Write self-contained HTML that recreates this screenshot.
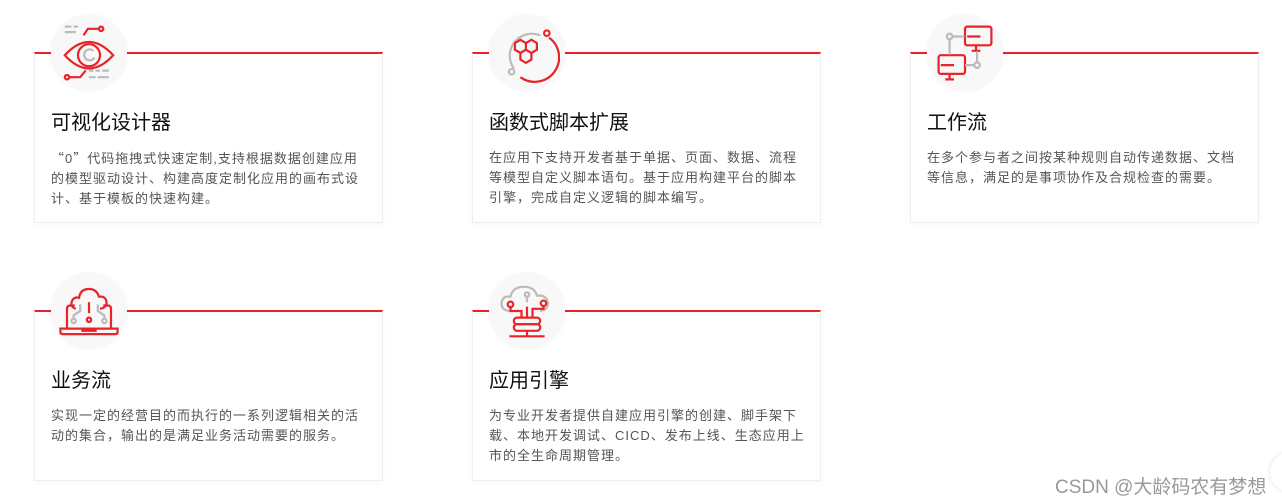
<!DOCTYPE html>
<html><head><meta charset="utf-8"><style>
body{margin:0;width:1282px;height:501px;background:#fff;position:relative;overflow:hidden;font-family:"Liberation Sans","Noto Sans CJK SC",sans-serif;}
.card{position:absolute;width:349px;height:171px;border:1px solid #eceef3;border-top:2px solid #e8232a;box-sizing:border-box;box-shadow:0 2px 6px rgba(0,0,0,0.03);background:#fff}
.circ{position:absolute;left:16px;top:-39px;width:76px;height:76px;border-radius:50%;background:#f8f8f8;box-shadow:0 0 3px rgba(0,0,0,0.06)}
.circ svg{position:absolute;left:5px;top:5px;width:66px;height:66px}
.t{position:absolute;left:16px;top:52px;font-size:20px;color:#111;}
.d{position:absolute;left:16px;top:94px;width:330px;font-size:13px;letter-spacing:1px;line-height:20px;color:#555;white-space:nowrap}
.q{font-family:"Noto Sans CJK SC",sans-serif}
.wm{position:absolute;left:1055px;top:472px;font-size:19px;color:#999;text-shadow:0 0 1px #fff}
</style></head><body>

<div class="card" style="left:34px;top:52px">
<div class="circ"><svg viewBox="0 0 60 60" fill="none" stroke-width="2">
<path d="M8 32 Q30 8 52 32 Q30 56 8 32Z" stroke="#e8232a"/>
<circle cx="30" cy="32" r="10" stroke="#e8232a"/>
<path d="M34 28a5 5 0 1 0 1 6" stroke="#bbb"/>
<path d="M25 14 l4-6 h10" stroke="#e8232a"/><circle cx="41" cy="8" r="2" stroke="#e8232a"/>
<path d="M8 6h6M16 6h4M8 11h10" stroke="#bbb"/>
<path d="M12 52h10l5-6" stroke="#e8232a"/><circle cx="10" cy="52" r="2" stroke="#e8232a"/>
<path d="M30 46h4M36 46h4M42 46h6M30 52h6M38 52h10" stroke="#bbb"/>
</svg></div>
<div class="t">可视化设计器</div>
<div class="d"><span class="q">“</span>0<span class="q">”</span>代码拖拽式快速定制,支持根据数据创建应用<br>的模型驱动设计、构建高度定制化应用的画布式设<br>计、基于模板的快速构建。</div>
</div>

<div class="card" style="left:472px;top:52px">
<div class="circ"><svg viewBox="0 0 60 60" fill="none" stroke-width="2">
<path d="M18 44 A20 20 0 0 1 42 14" stroke="#bbb"/>
<circle cx="16" cy="47" r="2.5" stroke="#bbb"/>
<path d="M50 16 A22 22 0 0 1 24 52" stroke="#e8232a"/>
<circle cx="48" cy="12" r="2.5" stroke="#e8232a"/>
<path d="M24 18l5 3v6l-5 3-5-3v-6z M34 18l5 3v6l-5 3-5-3v-6z M29 27l5 3v6l-5 3-5-3v-6z" stroke="#e8232a"/>
</svg></div>
<div class="t">函数式脚本扩展</div>
<div class="d">在应用下支持开发者基于单据、页面、数据、流程<br>等模型自定义脚本语句。基于应用构建平台的脚本<br>引擎，完成自定义逻辑的脚本编写。</div>
</div>

<div class="card" style="left:910px;top:52px">
<div class="circ"><svg viewBox="0 0 60 60" fill="none" stroke-width="2">
<rect x="30" y="6" width="24" height="17" rx="2" stroke="#e8232a"/><path d="M32 15h12M40 23v4M36 28h8" stroke="#e8232a"/>
<rect x="6" y="32" width="24" height="17" rx="2" stroke="#e8232a"/><path d="M8 41h12M16 49v4M12 54h8" stroke="#e8232a"/>
<circle cx="16" cy="15" r="2.5" stroke="#bbb"/><path d="M18.5 15h11M16 17.5v14" stroke="#bbb"/>
<circle cx="41" cy="41" r="2.5" stroke="#bbb"/><path d="M30 41h8.5M41 38.5v-10" stroke="#bbb"/>
</svg></div>
<div class="t">工作流</div>
<div class="d">在多个参与者之间按某种规则自动传递数据、文档<br>等信息，满足的是事项协作及合规检查的需要。</div>
</div>

<div class="card" style="left:34px;top:310px">
<div class="circ"><svg viewBox="0 0 60 60" fill="none" stroke-width="2">
<path d="M10 46V28q0-3 3-3h4M43 25h4q3 0 3 3v18" stroke="#e8232a"/>
<path d="M4 46h52v3q0 2-2 2H6q-2 0-2-2z M24 46v2h12v-2" stroke="#e8232a"/>
<path d="M18 28q-6-2-3-8 2-3 6-2 1-8 9-8 7 0 9 7 6-1 7 5 0 5-6 6" stroke="#e8232a"/>
<path d="M30 22v10" stroke="#e8232a"/><circle cx="30" cy="38" r="2" stroke="#e8232a"/>
<path d="M22 24v6l-6 4v3M38 24v6l6 4v3" stroke="#bbb"/><circle cx="16" cy="39" r="2" stroke="#bbb"/><circle cx="44" cy="39" r="2" stroke="#bbb"/>
</svg></div>
<div class="t">业务流</div>
<div class="d">实现一定的经营目的而执行的一系列逻辑相关的活<br>动的集合，输出的是满足业务活动需要的服务。</div>
</div>

<div class="card" style="left:472px;top:310px">
<div class="circ"><svg viewBox="0 0 60 60" fill="none" stroke-width="2">
<path d="M14 30q-8-1-7-8 1-6 8-5 2-9 12-9 10 0 12 8 9-1 10 7 0 6-7 7" stroke="#bbb"/>
<circle cx="30" cy="15" r="2" stroke="#bbb"/><path d="M30 17v5" stroke="#bbb"/>
<circle cx="15" cy="24" r="2.5" stroke="#e8232a"/><circle cx="45" cy="23" r="2.5" stroke="#e8232a"/>
<path d="M15 27v3h10v6M45 26v2h-10v8M30 26v10" stroke="#e8232a"/>
<rect x="18" y="36" width="24" height="6" rx="3" stroke="#e8232a"/><rect x="18" y="42" width="24" height="6" rx="3" stroke="#e8232a"/>
<path d="M30 48v4M14 53h32" stroke="#e8232a"/>
</svg></div>
<div class="t">应用引擎</div>
<div class="d">为专业开发者提供自建应用引擎的创建、脚手架下<br>载、本地开发调试、CICD、发布上线、生态应用上<br>市的全生命周期管理。</div>
</div>

<div class="wm">CSDN @大龄码农有梦想</div>
<div style="position:absolute;left:1270px;top:452px;width:40px;height:40px;border-radius:50%;background:#fff;box-shadow:0 0 4px rgba(0,0,0,0.12)"></div>
</body></html>
